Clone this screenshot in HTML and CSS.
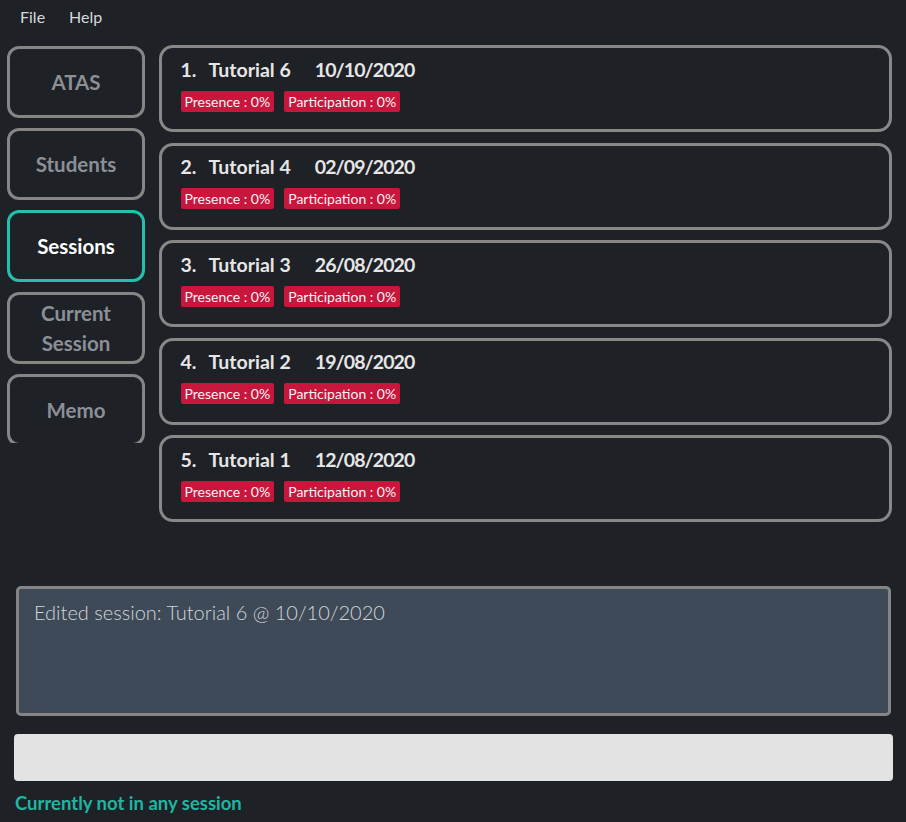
FILE: index.html
```html
<!DOCTYPE html>
<html>
<head>
<meta charset="utf-8">
<link rel="stylesheet" href="styles.css">
</head>
<body>
<div class="menubar">
  <span class="menu-item">File</span>
  <span class="menu-item">Help</span>
</div>
<div class="main">
  <div class="sidebar">
    <div class="nav-btn">ATAS</div>
    <div class="nav-btn">Students</div>
    <div class="nav-btn active">Sessions</div>
    <div class="nav-btn">Current<br>Session</div>
    <div class="nav-btn">Memo</div>
  </div>
  <div class="cards">
    <div class="card">
      <div class="title"><span class="idx">1.</span><span class="name">Tutorial 6</span><span class="date">10/10/2020</span></div>
      <div class="badges"><span class="badge">Presence : 0%</span><span class="badge">Participation : 0%</span></div>
    </div>
    <div class="card">
      <div class="title"><span class="idx">2.</span><span class="name">Tutorial 4</span><span class="date">02/09/2020</span></div>
      <div class="badges"><span class="badge">Presence : 0%</span><span class="badge">Participation : 0%</span></div>
    </div>
    <div class="card">
      <div class="title"><span class="idx">3.</span><span class="name">Tutorial 3</span><span class="date">26/08/2020</span></div>
      <div class="badges"><span class="badge">Presence : 0%</span><span class="badge">Participation : 0%</span></div>
    </div>
    <div class="card">
      <div class="title"><span class="idx">4.</span><span class="name">Tutorial 2</span><span class="date">19/08/2020</span></div>
      <div class="badges"><span class="badge">Presence : 0%</span><span class="badge">Participation : 0%</span></div>
    </div>
    <div class="card">
      <div class="title"><span class="idx">5.</span><span class="name">Tutorial 1</span><span class="date">12/08/2020</span></div>
      <div class="badges"><span class="badge">Presence : 0%</span><span class="badge">Participation : 0%</span></div>
    </div>
  </div>
</div>
<div class="result">Edited session: Tutorial 6 @ 10/10/2020</div>
<div class="command"></div>
<div class="status">Currently not in any session</div>
</body>
</html>
```
FILE: styles.css
```css
html, body {
  margin: 0;
  padding: 0;
  background: #1e2126;
  width: 906px;
  height: 822px;
  overflow: hidden;
  font-family: Lato, "Open Sans", sans-serif;
}
.menubar {
  height: 34px;
  display: flex;
  align-items: center;
  padding-left: 20px;
  padding-bottom: 2px;
  box-sizing: border-box;
  gap: 24px;
}
.menu-item {
  color: #d6d8da;
  font-size: 16px;
  font-weight: 400;
}
.main {
  display: flex;
  gap: 14px;
  padding: 11px 14px 0 7px;
  height: 541px;
  box-sizing: border-box;
}
.sidebar {
  width: 138px;
  flex: none;
  height: 397px;
  margin-top: 1px;
  overflow: hidden;
  display: flex;
  flex-direction: column;
  gap: 10px;
}
.nav-btn {
  flex: none;
  height: 72px;
  box-sizing: border-box;
  border: 3px solid #858585;
  border-radius: 12px;
  display: flex;
  align-items: center;
  justify-content: center;
  text-align: center;
  color: #8b9097;
  font-size: 20.5px;
  font-weight: 700;
  line-height: 30px;
}
.nav-btn.active {
  border-color: #24bfae;
  color: #ffffff;
}
.cards {
  flex: 1;
  display: flex;
  flex-direction: column;
  gap: 10.5px;
}
.card {
  height: 87px;
  box-sizing: border-box;
  border: 3.5px solid #888888;
  border-radius: 14px;
  padding: 9.5px 18.5px;
}
.title {
  color: #e6e6e6;
  font-size: 19.5px;
  font-weight: 700;
  line-height: 24px;
  white-space: nowrap;
}
.idx { margin-right: 12px; }
.name { margin-right: 24px; }
.date { letter-spacing: -0.9px; }
.badges {
  display: flex;
  gap: 10px;
  margin-top: 9px;
}
.badge {
  background: #c8163c;
  color: #f4f4f4;
  font-size: 14px;
  line-height: 21px;
  height: 21px;
  padding: 0 4px;
  border-radius: 2px;
}
.result {
  margin: 11px 15px 0 16px;
  height: 130px;
  box-sizing: border-box;
  border: 3px solid #858585;
  border-radius: 5px;
  background: #3e4a57;
  color: #d2d6da;
  font-size: 20px;
  font-weight: 300;
  padding: 10px 15px;
  line-height: 26px;
}
.command {
  margin: 18px 13px 0 14px;
  height: 47px;
  background: #e3e3e3;
  border-radius: 4px;
}
.status {
  margin: 10px 0 0 15px;
  color: #21b5a1;
  font-size: 18.5px;
  font-weight: 700;
  line-height: 24px;
}
```
